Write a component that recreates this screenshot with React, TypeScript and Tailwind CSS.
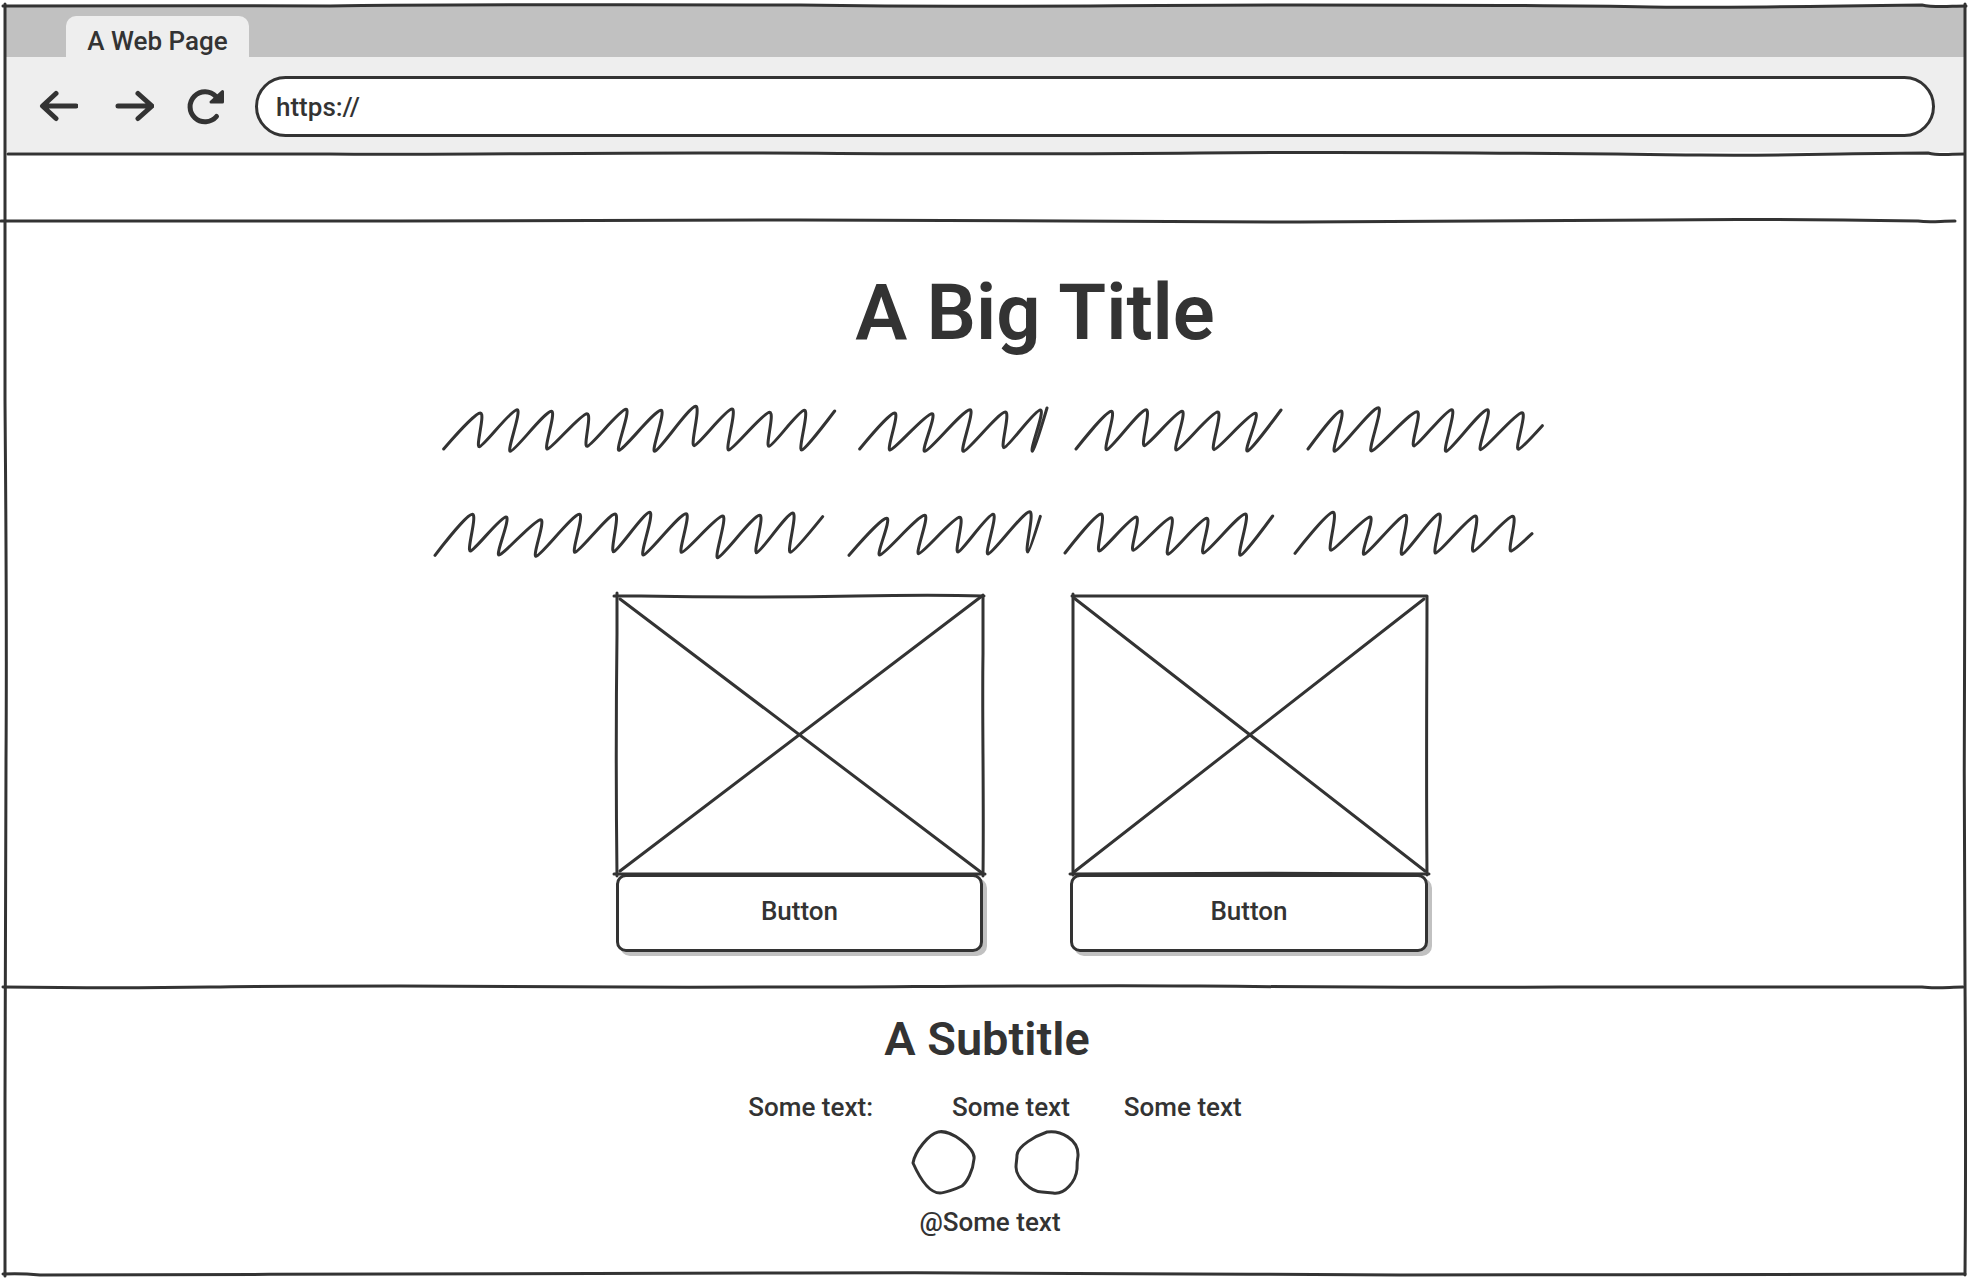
import React from "react";

type Point = [number, number];

/* Each word of scribble: a start point, alternating peaks and troughs, an end point. */
const FIRST_LINE: Point[][] = [
  [[40, 180], [153, 70], [147, 173], [263, 60], [240, 187], [366, 65], [351, 180], [473, 72], [470, 172], [590, 59], [566, 184], [695, 62], [673, 187], [799, 50], [791, 170], [908, 58], [895, 183], [1021, 68], [1016, 172], [1125, 62], [1114, 183], [1213, 66]],
  [[1288, 180], [1396, 70], [1379, 183], [1508, 72], [1483, 187], [1622, 60], [1599, 187], [1728, 67], [1721, 176], [1833, 61], [1807, 187], [1850, 57]],
  [[1937, 180], [2046, 65], [2029, 182], [2150, 60], [2142, 170], [2258, 65], [2238, 183], [2365, 67], [2351, 182], [2478, 71], [2451, 186], [2552, 63]],
  [[2633, 180], [2735, 64], [2713, 187], [2847, 54], [2823, 186], [2963, 66], [2951, 171], [3067, 60], [3047, 187], [3174, 60], [3151, 182], [3278, 69], [3264, 181], [3336, 110]],
];

const SECOND_LINE: Point[][] = [
  [[14, 157], [129, 32], [120, 144], [230, 40], [206, 156], [334, 48], [317, 160], [450, 32], [434, 148], [557, 31], [550, 146], [661, 26], [639, 156], [770, 30], [754, 148], [880, 37], [862, 164], [991, 35], [979, 149], [1090, 28], [1080, 148], [1177, 41]],
  [[1256, 157], [1372, 44], [1348, 156], [1486, 35], [1465, 152], [1591, 41], [1583, 147], [1691, 32], [1673, 153], [1801, 24], [1793, 147], [1830, 40]],
  [[1904, 150], [2015, 31], [2007, 144], [2120, 40], [2109, 142], [2225, 42], [2213, 154], [2332, 44], [2319, 150], [2448, 31], [2430, 157], [2527, 39]],
  [[2594, 151], [2711, 26], [2702, 142], [2822, 40], [2801, 154], [2928, 35], [2915, 154], [3029, 31], [3016, 150], [3138, 37], [3129, 145], [3250, 38], [3242, 144], [3305, 92]],
];

/* Every peak and trough is passed horizontally: long rises, short steep falls. */
function scribblePath(source: Point[]): string {
  const last = source.length - 1;
  const points = source.map(([x, y], i): Point => (i % 2 === 1 && i < last ? [x - 3, y + 2] : [x, y]));
  let d = `M${points[0].join(" ")}`;
  for (let i = 1; i <= last; i++) {
    const [x0, y0] = points[i - 1];
    const [x1, y1] = points[i];
    const rising = i % 2 === 1;
    const width = x1 - x0;
    const start = i === 1 ? [x0, y0] : [x0 + (rising ? width * 0.11 : 16), y0];
    const end = i === last ? [x1, y1] : [x1 - (rising ? width * 0.16 : 12), y1];
    d += ` C${start.join(" ")} ${end.join(" ")} ${x1} ${y1}`;
  }
  return d;
}

function Scribble({ words, top }: { words: Point[][]; top: number }) {
  return (
    <svg aria-hidden="true" viewBox={`-10 ${top} 3351 180`} className="w-[1117px] max-w-full overflow-visible" fill="none" stroke="#333" strokeWidth="9" strokeLinecap="round" strokeLinejoin="round">
      {words.map((w, i) => (
        <path key={i} d={scribblePath(w)} />
      ))}
    </svg>
  );
}

function Rule({ d }: { d: string }) {
  return (
    <svg aria-hidden="true" viewBox="0 0 1970 4" preserveAspectRatio="none" className="block h-1 w-full shrink-0 overflow-visible" fill="none" stroke="#333" strokeWidth="3" strokeLinecap="round">
      <path d={d} vectorEffect="non-scaling-stroke" />
    </svg>
  );
}

function WindowOutline() {
  return (
    <svg aria-hidden="true" viewBox="0 0 1970 1280" preserveAspectRatio="none" className="pointer-events-none absolute inset-0 size-full" fill="none" stroke="#333" strokeWidth="3" strokeLinecap="round">
      <path vectorEffect="non-scaling-stroke" d="M3 6 C120 5 220 6 330 6 C440 4 560 5 800 5 C1000 8 1100 5 1300 5 S1600 6 1650 7 S1850 6 1922 5 C1935 8 1950 6 1966 6" />
      <path vectorEffect="non-scaling-stroke" d="M5 4 C5 120 4 260 5 400 S7 620 6 760 S5 1000 5 1100 V1276" />
      <path vectorEffect="non-scaling-stroke" d="M1965 4 C1965 150 1966 300 1965 500 S1964 800 1965 980 S1966 1150 1965 1275" />
      <path vectorEffect="non-scaling-stroke" d="M3 1274 Q20 1273 40 1275 C300 1274 600 1274 800 1273 S1200 1274 1400 1275 S1750 1273 1965 1274" />
    </svg>
  );
}

function Placeholder({ width, frame, cross }: { width: number; frame: string; cross: string }) {
  return (
    <svg role="img" aria-label="Image placeholder" viewBox={`0 0 ${width} 280`} className="block w-full overflow-visible" fill="none" stroke="#333" strokeWidth="3" strokeLinecap="round">
      <path d={frame} />
      <path d={cross} />
    </svg>
  );
}

function CardButton() {
  return (
    <button type="button" className="w-full rounded-[10px] border-[3px] border-[#333] bg-white pb-[22px] pt-[18px] text-[26px] font-medium leading-8 shadow-[4px_4px_0_#c1c1c1]">
      Button
    </button>
  );
}

export default function App() {
  return (
    <div className="relative flex min-h-screen flex-col bg-white pt-1.5 font-['Roboto',sans-serif] text-[#333]">
      <header className="mx-1.5">
        <div className="flex h-[51px] items-end bg-[#c1c1c1] pl-[60px]">
          <div className="flex w-[183px] justify-center rounded-t-[10px] bg-[#eee] pt-[9px] text-[26px] font-medium leading-8">
            A Web Page
          </div>
        </div>
        <nav className="flex h-[95px] items-center bg-[#eee] pl-8 pr-[29px] pt-1">
          <button type="button" aria-label="Back" className="mr-9">
            <svg viewBox="0 0 40 34" className="block w-10" fill="none" stroke="#333" strokeWidth="5" strokeLinecap="round" strokeLinejoin="round">
              <path d="M38 16H5M18 3.500L4.500 16L18 28.500" />
            </svg>
          </button>
          <button type="button" aria-label="Forward" className="mr-8">
            <svg viewBox="0 0 40 34" className="block w-10" fill="none" stroke="#333" strokeWidth="5" strokeLinecap="round" strokeLinejoin="round">
              <path d="M4 16H37M24 3.500L38 16L24 28.500" />
            </svg>
          </button>
          <button type="button" aria-label="Reload" className="mr-[29px]">
            <svg viewBox="0 0 40 38" className="block w-10" fill="none" stroke="#333" strokeWidth="5" strokeLinecap="round" strokeLinejoin="round">
              <path d="M30.500 28.500A15 15 0 1 1 30 8.500" />
              <path d="M36.500 3.500V14H25Z" fill="#333" strokeWidth="3" />
            </svg>
          </button>
          <input
            type="text"
            aria-label="Address"
            defaultValue="https://"
            className="h-[61px] min-w-0 flex-1 rounded-full border-[3px] border-[#333] bg-white pl-[18px] pr-6 text-[26px] font-medium leading-8 outline-none"
          />
        </nav>
      </header>
      <Rule d="M8 2 C150 1 240 1 330 2 S560 1 700 1 S1000 3 1200 1 S1600 2 1700 3 S1850 1 1928 1 C1940 4 1950 2 1964 2" />
      <div className="h-[63px]" />
      <Rule d="M1 2 C100 3 250 3 400 2 S700 1 800 1 S1100 3 1300 3 S1600 2 1660 1 S1850 1 1918 2 C1930 4 1940 2 1955 2" />

      <main className="flex flex-col items-center px-2 pb-[33px] pt-[42px]">
        <h1 className="pl-[100px] text-[78px] font-semibold leading-[96px]">A Big Title</h1>
        <div className="flex w-full flex-col items-center gap-11 pt-[38px]">
          <Scribble words={FIRST_LINE} top={30} />
          <Scribble words={SECOND_LINE} top={0} />
        </div>
        <div className="flex gap-[87px] pl-[74px] pt-[31px]">
          <section className="w-[367px]">
            <Placeholder
              width={367}
              frame="M-2 2 H25 C80 3 180 3 240 2 S330 1 368 2 M1 -1 V40 C0 120 0 200 1 282 M367 1 V60 C366 120 368 200 367 282 M-2 280 H369"
              cross="M4 5 L366 279 M366 2 L4 277"
            />
            <CardButton />
          </section>
          <section className="w-[358px]">
            <Placeholder
              width={358}
              frame="M2 2 H357 M3 0 V281 M357 2 C357 80 356 160 357 281 M0 280 C90 279 250 279 359 280"
              cross="M4 4 L355 277 M354 5 L4 278"
            />
            <CardButton />
          </section>
        </div>
      </main>

      <Rule d="M3 2 C80 3 150 3 210 2 S300 1 400 1 S700 3 850 2 S1100 0 1200 1 S1400 3 1560 2 S1850 1 1922 2 C1935 4 1950 2 1963 2" />
      <footer className="flex flex-col items-center px-2 pb-10 pt-[22px]">
        <h2 className="pl-1 text-[47px] font-semibold leading-[56px]">A Subtitle</h2>
        <div className="flex pl-5 pt-6 text-[26px] font-medium leading-8">
          <p className="mr-[79px]">Some text:</p>
          <p className="mr-[54px]">Some text</p>
          <p>Some text</p>
        </div>
        <div className="flex gap-9 pl-5 pt-1.5" aria-hidden="true">
          <svg viewBox="-2 -2 67 67" className="w-[67px]" fill="none" stroke="#333" strokeWidth="3" strokeLinejoin="round">
            <path d="M1 32 C3 20 17 3 26 1 C38 -2 64 17 62 28 C61 40 55 51 50 55 C44 58 32 62 28 62 C15 62 5 41 1 32Z" />
          </svg>
          <svg viewBox="-2 -2 67 67" className="w-[67px]" fill="none" stroke="#333" strokeWidth="3" strokeLinejoin="round">
            <path d="M32 1 C45 -1 64 8 63 25 C62 30 62 33 62 38 C61 50 50 64 38 62 L27 61 C16 61 1 47 1 36 C1 32 2 28 2 24 C3 15 20 5 32 1Z" />
          </svg>
        </div>
        <p className="pl-2.5 pt-2.5 text-[26px] font-medium leading-8">@Some text</p>
      </footer>
      <WindowOutline />
    </div>
  );
}
